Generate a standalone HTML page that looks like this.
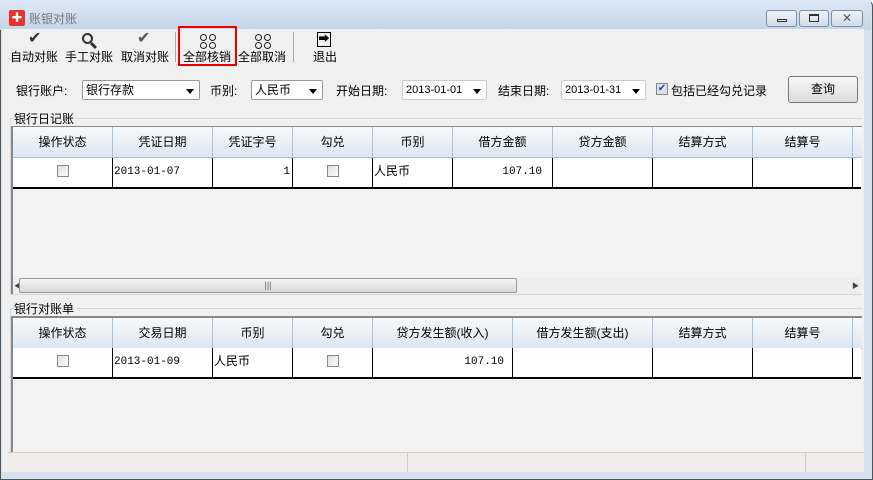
<!DOCTYPE html>
<html><head><meta charset="utf-8"><style>
*{margin:0;padding:0;box-sizing:border-box}
body{width:873px;height:480px;overflow:hidden;background:#fff;font-family:"Liberation Sans","Noto Sans CJK SC",sans-serif;font-size:12px;color:#000}
.a{position:absolute}
#win{left:0;top:0;width:873px;height:480px;background:#d6e2ef;border:1px solid #555;border-radius:6px 6px 0 0}
#title{left:0;top:0;width:871px;height:30px;background:linear-gradient(#dde8f4,#c4d6ea)}
#client{left:2px;top:29px;width:862px;height:443px;background:#f0f0f0}
.tb{font-size:12px;text-align:center;white-space:nowrap}
.cell{position:absolute;border-right:1px solid #a8c0da;text-align:center;line-height:30px;height:30px;font-size:12px}
.hdr{background:linear-gradient(#f6f9fc,#dde6f1);border-bottom:1px solid #a8c0da;height:31px}
.d{position:absolute;border-right:1.5px solid #000;height:29px;line-height:29px;font-size:11px;background:#fff;font-family:"Liberation Mono","Noto Sans CJK SC",monospace}
.cb{display:inline-block;width:12px;height:12px;border:1px solid #888;background:linear-gradient(135deg,#ddd,#fff);vertical-align:middle}
.combo{position:absolute;height:20px;background:#fff;border:1px solid #999;border-radius:2px;line-height:18px;padding-left:3px}
.arr{position:absolute;right:5px;top:8px;border-left:4px solid transparent;border-right:4px solid transparent;border-top:5px solid #000}
.o{position:absolute;width:7px;height:7px;border:1.3px solid #222;border-radius:50%}
</style></head><body>
<div id="win" class="a"></div>
<div id="title" class="a"></div>
<div class="a" style="left:9px;top:10px;width:16px;height:16px;background:#e8322e;border-radius:2px;color:#fff;font-size:11px;line-height:16px;text-align:center">✚</div>
<div class="a" style="left:29px;top:10px;color:#777;font-size:12px">账银对账</div>
<div class="a" style="left:766px;top:10px;width:31px;height:17px;border:1px solid #7d8fa8;border-radius:3px;background:linear-gradient(#eef3f9,#cfdbea)"><div class="a" style="left:10px;top:8px;width:10px;height:3px;border:1px solid #333"></div></div>
<div class="a" style="left:799px;top:10px;width:30px;height:17px;border:1px solid #7d8fa8;border-radius:3px;background:linear-gradient(#eef3f9,#cfdbea)"><div class="a" style="left:9px;top:3px;width:10px;height:8px;border:1px solid #333;border-top-width:2px"></div></div>
<div class="a" style="left:831px;top:10px;width:32px;height:17px;border:1px solid #7d8fa8;border-radius:3px;background:linear-gradient(#eef3f9,#cfdbea);text-align:center;font-size:12px;line-height:15px;color:#555">✕</div>
<div id="client" class="a"></div>

<!-- toolbar -->
<div class="a" style="left:28px;top:31px;font-size:16px;line-height:16px;color:#333">✔</div>
<div class="a tb" style="left:10px;top:48px">自动对账</div>
<div class="a" style="left:82px;top:33px;width:11px;height:11px;border:2px solid #333;border-radius:50%"></div>
<div class="a" style="left:90px;top:44px;width:7px;height:3px;background:#333;transform:rotate(45deg)"></div>
<div class="a tb" style="left:65px;top:48px">手工对账</div>
<div class="a" style="left:137px;top:31px;font-size:16px;line-height:16px;color:#555">✔</div>
<div class="a tb" style="left:121px;top:48px">取消对账</div>
<div class="a" style="left:175px;top:32px;width:1px;height:30px;background:#aaa"></div>
<div class="a" style="left:178px;top:26px;width:59px;height:40px;border:2px solid #e00"></div>
<div class="o" style="left:200px;top:34px"></div><div class="o" style="left:209px;top:34px"></div>
<div class="o" style="left:200px;top:42px"></div><div class="o" style="left:209px;top:42px"></div>
<div class="a tb" style="left:183px;top:48px">全部核销</div>
<div class="o" style="left:255px;top:34px"></div><div class="o" style="left:264px;top:34px"></div>
<div class="o" style="left:255px;top:42px"></div><div class="o" style="left:264px;top:42px"></div>
<div class="a tb" style="left:238px;top:48px">全部取消</div>
<div class="a" style="left:293px;top:32px;width:1px;height:30px;background:#aaa"></div>
<div class="a" style="left:317px;top:32px;width:14px;height:15px;border:1.5px solid #000;font-size:11px;line-height:12px;text-align:center">➡</div>
<div class="a tb" style="left:313px;top:48px">退出</div>

<!-- filter -->
<div class="a" style="left:16px;top:82px">银行账户:</div>
<div class="combo" style="left:82px;top:80px;width:118px">银行存款<div class="arr"></div></div>
<div class="a" style="left:210px;top:82px">币别:</div>
<div class="combo" style="left:251px;top:80px;width:72px">人民币<div class="arr"></div></div>
<div class="a" style="left:336px;top:82px">开始日期:</div>
<div class="combo" style="left:402px;top:80px;width:85px;border-color:#ccc;font-size:11px">2013-01-01<div class="arr"></div></div>
<div class="a" style="left:498px;top:82px">结束日期:</div>
<div class="combo" style="left:561px;top:80px;width:85px;border-color:#ccc;font-size:11px">2013-01-31<div class="arr"></div></div>
<div class="a" style="left:656px;top:83px;width:12px;height:12px;border:1px solid #888;background:#dde;font-size:10px;line-height:10px;color:#2244aa;text-align:center">✔</div>
<div class="a" style="left:671px;top:82px">包括已经勾兑记录</div>
<div class="a" style="left:788px;top:76px;width:70px;height:27px;border:1px solid #777;border-radius:3px;background:linear-gradient(#f8f8f8,#dcdcdc);text-align:center;line-height:25px">查询</div>

<!-- group 1 -->
<div class="a" style="left:10px;top:118px;width:852px;height:177px;border:1px solid #d0d8e0;border-right:none"></div>
<div class="a" style="left:14px;top:110px;background:#f0f0f0;padding-right:2px">银行日记账</div>
<div class="a" style="left:11px;top:126px;width:851px;height:168px;background:#f3f3f3;border-left:2px solid #888;border-top:2px solid #888"></div>
<div class="a hdr" style="left:13px;top:127px;width:849px"></div>
<div class="cell" style="left:13px;top:127px;width:100px">操作状态</div>
<div class="cell" style="left:113px;top:127px;width:100px">凭证日期</div>
<div class="cell" style="left:213px;top:127px;width:80px">凭证字号</div>
<div class="cell" style="left:293px;top:127px;width:80px">勾兑</div>
<div class="cell" style="left:373px;top:127px;width:80px">币别</div>
<div class="cell" style="left:453px;top:127px;width:100px">借方金额</div>
<div class="cell" style="left:553px;top:127px;width:100px">贷方金额</div>
<div class="cell" style="left:653px;top:127px;width:100px">结算方式</div>
<div class="cell" style="left:753px;top:127px;width:100px">结算号</div>
<div class="a" style="left:13px;top:158px;width:848px;height:31px;background:#fff;border-bottom:2px solid #000"></div>
<div class="d" style="left:13px;top:158px;width:100px;text-align:center"><span class="cb"></span></div>
<div class="d" style="left:113px;top:158px;width:100px;padding-left:1px">2013-01-07</div>
<div class="d" style="left:213px;top:158px;width:80px;text-align:right;padding-right:2px">1</div>
<div class="d" style="left:293px;top:158px;width:80px;text-align:center"><span class="cb"></span></div>
<div class="d" style="left:373px;top:158px;width:80px;font-size:12px;padding-left:1px">人民币</div>
<div class="d" style="left:453px;top:158px;width:100px;text-align:right;padding-right:10px">107.10</div>
<div class="d" style="left:553px;top:158px;width:100px"></div>
<div class="d" style="left:653px;top:158px;width:100px"></div>
<div class="d" style="left:753px;top:158px;width:100px"></div>
<div class="a" style="left:13px;top:277px;width:848px;height:17px;background:#eee"></div>
<div class="a" style="left:14px;top:281px;font-size:7px;color:#444">◀</div>
<div class="a" style="left:852px;top:281px;font-size:7px;color:#444">▶</div>
<div class="a" style="left:19px;top:278px;width:498px;height:15px;border:1px solid #999;border-radius:2px;background:linear-gradient(#f4f4f4,#d8d8d8);text-align:center;font-size:9px;line-height:13px;color:#666">|||</div>

<!-- group 2 -->
<div class="a" style="left:10px;top:308px;width:852px;height:145px;border:1px solid #d0d8e0;border-right:none"></div>
<div class="a" style="left:14px;top:300px;background:#f0f0f0;padding-right:2px">银行对账单</div>
<div class="a" style="left:11px;top:316px;width:851px;height:136px;background:#f3f3f3;border-left:2px solid #888;border-top:2px solid #888"></div>
<div class="a hdr" style="left:13px;top:318px;width:849px"></div>
<div class="cell" style="left:13px;top:318px;width:100px">操作状态</div>
<div class="cell" style="left:113px;top:318px;width:100px">交易日期</div>
<div class="cell" style="left:213px;top:318px;width:80px">币别</div>
<div class="cell" style="left:293px;top:318px;width:80px">勾兑</div>
<div class="cell" style="left:373px;top:318px;width:140px">贷方发生额(收入)</div>
<div class="cell" style="left:513px;top:318px;width:140px">借方发生额(支出)</div>
<div class="cell" style="left:653px;top:318px;width:100px">结算方式</div>
<div class="cell" style="left:753px;top:318px;width:100px">结算号</div>
<div class="a" style="left:13px;top:348px;width:848px;height:31px;background:#fff;border-bottom:2px solid #000"></div>
<div class="d" style="left:13px;top:348px;width:100px;text-align:center"><span class="cb"></span></div>
<div class="d" style="left:113px;top:348px;width:100px;padding-left:1px">2013-01-09</div>
<div class="d" style="left:213px;top:348px;width:80px;font-size:12px;padding-left:1px">人民币</div>
<div class="d" style="left:293px;top:348px;width:80px;text-align:center"><span class="cb"></span></div>
<div class="d" style="left:373px;top:348px;width:140px;text-align:right;padding-right:8px">107.10</div>
<div class="d" style="left:513px;top:348px;width:140px"></div>
<div class="d" style="left:653px;top:348px;width:100px"></div>
<div class="d" style="left:753px;top:348px;width:100px"></div>

<!-- status bar -->
<div class="a" style="left:8px;top:452px;width:856px;height:20px;background:#efecea;border-top:1px solid #ccc"></div>
<div class="a" style="left:407px;top:453px;width:1px;height:19px;background:#ccc"></div>
<div class="a" style="left:805px;top:453px;width:1px;height:19px;background:#ccc"></div>
</body></html>
